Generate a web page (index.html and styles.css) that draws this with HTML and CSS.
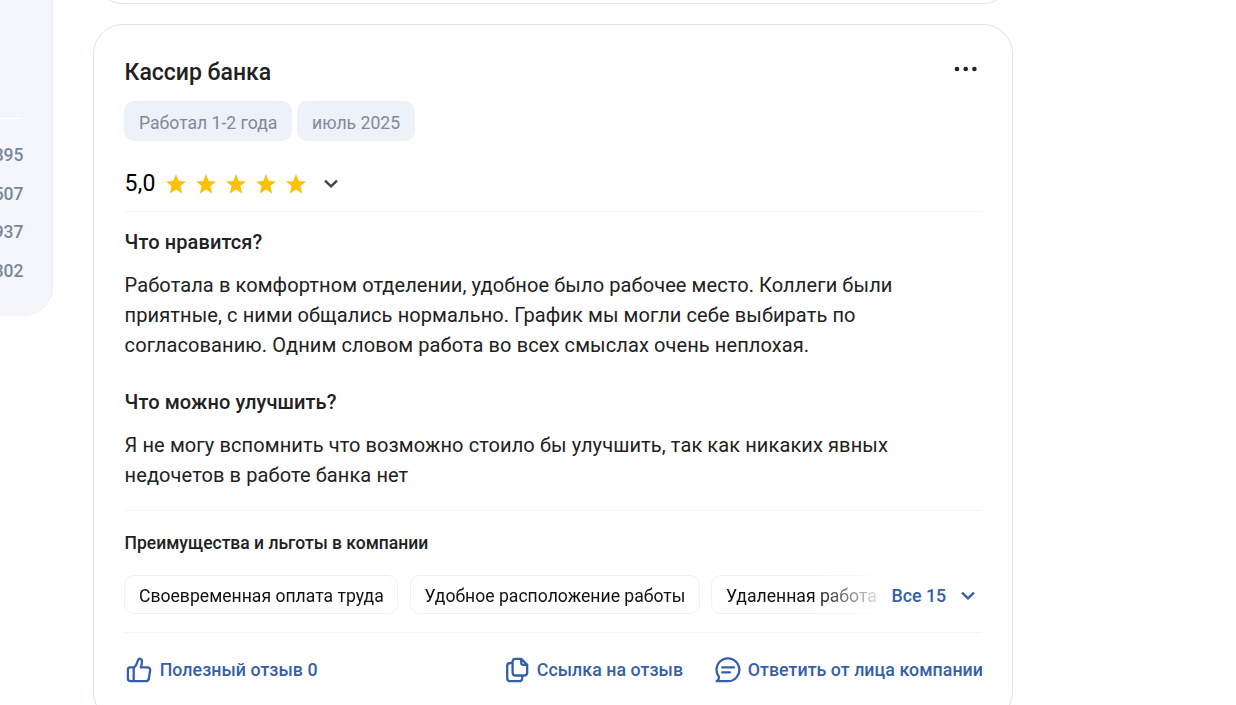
FILE: index.html
```html
<!DOCTYPE html>
<html lang="ru">
<head>
  <meta charset="UTF-8" />
  <title>Отзывы о работе</title>
  <link rel="stylesheet" href="styles.css">
</head>
<body>
  <div class="page">
    <aside class="sidebar">
      <div class="sidebar-line"></div>
      <ul class="counts">
        <li>895</li>
        <li>507</li>
        <li>937</li>
        <li>302</li>
      </ul>
    </aside>

    <main class="reviews">
      <div class="prev">
        <div class="card prev-card"></div>
      </div>

      <article class="card review">
        <div class="review-head">
          <h2>Кассир банка</h2>
          <svg class="dots" width="24" height="6" viewBox="0 0 24 6">
            <circle cx="3" cy="3" r="2.3"/>
            <circle cx="11.7" cy="3" r="2.3"/>
            <circle cx="20.4" cy="3" r="2.3"/>
          </svg>
        </div>

        <div class="tags">
          <span class="tag tag-work">Работал 1-2 года</span>
          <span class="tag tag-date">июль 2025</span>
        </div>

        <div class="rating">
          <span class="score">5,0</span>
          <div class="stars">
            <svg class="star" viewBox="0 0 20 20"><path d="M10 0l2.7 6.9 7.3.5-5.6 4.7 1.8 7.3L10 15.5l-6.2 3.9 1.8-7.3L0 7.4l7.3-.5z"/></svg>
            <svg class="star" viewBox="0 0 20 20"><path d="M10 0l2.7 6.9 7.3.5-5.6 4.7 1.8 7.3L10 15.5l-6.2 3.9 1.8-7.3L0 7.4l7.3-.5z"/></svg>
            <svg class="star" viewBox="0 0 20 20"><path d="M10 0l2.7 6.9 7.3.5-5.6 4.7 1.8 7.3L10 15.5l-6.2 3.9 1.8-7.3L0 7.4l7.3-.5z"/></svg>
            <svg class="star" viewBox="0 0 20 20"><path d="M10 0l2.7 6.9 7.3.5-5.6 4.7 1.8 7.3L10 15.5l-6.2 3.9 1.8-7.3L0 7.4l7.3-.5z"/></svg>
            <svg class="star" viewBox="0 0 20 20"><path d="M10 0l2.7 6.9 7.3.5-5.6 4.7 1.8 7.3L10 15.5l-6.2 3.9 1.8-7.3L0 7.4l7.3-.5z"/></svg>
          </div>
          <svg class="arrow" viewBox="0 0 14 10"><path d="M1 1.7L7 7.3L13 1.7"/></svg>
        </div>

        <section class="answers">
          <h3>Что нравится?</h3>
          <p>Работала в комфортном отделении, удобное было рабочее место. Коллеги были<br>приятные, с ними общались нормально. График мы могли себе выбирать по<br>согласованию. Одним словом работа во всех смыслах очень неплохая.</p>
          <h3>Что можно улучшить?</h3>
          <p>Я не могу вспомнить что возможно стоило бы улучшить, так как никаких явных<br>недочетов в работе банка нет</p>
        </section>

        <section class="benefits">
          <h4>Преимущества и льготы в компании</h4>
          <div class="benefits-row">
            <div class="benefits-list">
              <span class="benefit benefit-pay">Своевременная оплата труда</span>
              <span class="benefit benefit-place">Удобное расположение работы</span>
              <span class="benefit benefit-remote">Удаленная работа</span>
            </div>
            <a class="all">Все 15
              <svg class="arrow arrow-blue" viewBox="0 0 14 10"><path d="M1 1.7L7 7.3L13 1.7"/></svg>
            </a>
          </div>
        </section>

        <div class="actions">
          <a class="action">
            <svg class="icon" viewBox="0 0 28 28">
              <path d="M8.7 12V25.2M5 11.4H8.5C10 11.4 10.8 10 11.5 8.2L13.2 3.9C14 1.9 17 2.6 17 5.2C17 7.5 16.5 9 15.8 11.4H22.2C24.6 11.4 25.5 12.8 25.1 14.8L23.9 22.2C23.5 24.4 22.7 25.2 21 25.2H5.5C3.8 25.2 2.9 24.2 2.9 22.6V14C2.9 12.4 3.7 11.4 5 11.4Z"/>
            </svg>
            <span>Полезный отзыв 0</span>
          </a>
          <a class="action action-link">
            <svg class="icon" viewBox="0 0 28 28">
              <path d="M13.5 2.8H19.2L25.2 8.9V16.5C25.2 18.5 24.2 19.5 22.2 19.5H13.5C11.5 19.5 10.6 18.5 10.6 16.5V5.8C10.6 3.8 11.5 2.8 13.5 2.8ZM19.2 2.8V6.5C19.2 8.1 20 8.9 21.5 8.9H25.2M10.6 7H8.2C6.2 7 5.2 8 5.2 10V22.2C5.2 24.2 6.2 25.2 8.2 25.2H17.2C19.2 25.2 20.2 24.2 20.2 22.2V19.5"/>
            </svg>
            <span>Ссылка на отзыв</span>
          </a>
          <a class="action">
            <svg class="icon" viewBox="0 0 28 28">
              <path d="M3.5 25.2C5.2 24.2 6 22.8 6 20.9A11.4 11.4 0 1 1 15 25.2ZM9.2 11.3H21M9.2 16.3H17"/>
            </svg>
            <span>Ответить от лица компании</span>
          </a>
        </div>
      </article>
    </main>
  </div>
</body>
</html>
```
FILE: styles.css
```css
* {
  box-sizing: border-box;
}

body {
  margin: 0;
  height: 705px;
  overflow: hidden;
  background-color: #fff;
  color: #212121;
  font-family: Roboto, "Liberation Sans", sans-serif;
}

h2, h3, h4, p, ul {
  margin: 0;
  padding: 0;
  font-weight: 500;
}

.page {
  display: flex;
  align-items: flex-start;
  gap: 40px;
}

.sidebar {
  flex: none;
  width: 53px;
  height: 316px;
  padding-top: 118px;
  background-color: #f4f6fc;
  border-right: 1px solid #e8ecf3;
  border-bottom-right-radius: 30px;
}

.sidebar-line {
  width: 23px;
  height: 1px;
  background-color: #fff;
}

.counts {
  width: 23.5px;
  padding-top: 17px;
  list-style: none;
}

.counts li {
  display: flex;
  justify-content: flex-end;
  height: 38.7px;
  line-height: 38.7px;
  font-size: 17.5px;
  color: #7a8797;
}

.reviews {
  flex: none;
  width: 920px;
}

.card {
  border: 1px solid #dee4ed;
  border-radius: 30px;
}

.prev {
  display: flex;
  align-items: flex-end;
  height: 4px;
  margin-bottom: 20px;
  overflow: hidden;
}

.prev-card {
  flex: none;
  width: 920px;
  height: 80px;
}

.review {
  height: 698px;
  padding: 30px;
}

.review-head {
  display: flex;
  justify-content: space-between;
  height: 46px;
  padding-left: 0.6px;
}

h2 {
  font-size: 23px;
  line-height: 36px;
}

.dots {
  margin: 11px 4px 0 0;
  fill: #212121;
}

.tags {
  display: flex;
  gap: 5px;
  height: 40px;
}

.tag {
  padding: 0 15px;
  border-radius: 10px;
  background-color: #edf1f8;
  color: #7f8a99;
  font-size: 17.6px;
  line-height: 44px;
  white-space: nowrap;
}

.tag-work {
  width: 168px;
}

.tag-date {
  width: 118px;
}

.rating {
  display: flex;
  align-items: center;
  height: 71px;
  padding-top: 15px;
  border-bottom: 1px solid #f4f5f8;
}

.score {
  width: 42px;
  padding-left: 0.6px;
  font-size: 23px;
  letter-spacing: 0.2px;
  color: #000;
}

.stars {
  display: flex;
  gap: 10px;
}

.star {
  width: 20px;
  height: 20px;
  fill: #ffc107;
}

.arrow {
  width: 14px;
  height: 10px;
  margin-left: 18px;
  fill: none;
  stroke: #424242;
  stroke-width: 2.4;
}

.answers {
  height: 299px;
  padding: 15px 0 0 0.6px;
  border-bottom: 1px solid #f4f5f8;
  letter-spacing: 0.1px;
}

h3 {
  height: 43px;
  font-size: 20px;
  line-height: 30px;
}

.answers p {
  margin-bottom: 27px;
  font-size: 20px;
  line-height: 30px;
  font-weight: 400;
  white-space: nowrap;
}

.benefits {
  height: 122px;
  padding-top: 17px;
  border-bottom: 1px solid #f4f5f8;
}

h4 {
  height: 47px;
  padding-left: 0.6px;
  font-size: 17.5px;
  line-height: 30px;
}

.benefits-row {
  display: flex;
}

.benefits-list {
  display: flex;
  gap: 11.5px;
  width: 753px;
  overflow: hidden;
  -webkit-mask-image: linear-gradient(to right, #000 690px, transparent 763px);
  mask-image: linear-gradient(to right, #000 690px, transparent 763px);
}

.benefit {
  flex: none;
  height: 39px;
  padding: 0 14px;
  border: 1px solid #eef0f6;
  border-radius: 10px;
  color: #111;
  font-size: 17.6px;
  line-height: 40px;
  white-space: nowrap;
}

.benefit-pay {
  width: 274px;
}

.benefit-place {
  width: 290px;
}

.benefit-remote {
  width: 180px;
}

.all {
  display: flex;
  align-items: center;
  margin-left: 14.5px;
  padding-top: 2px;
  color: #355fa8;
  font-size: 17.8px;
  font-weight: 500;
  white-space: nowrap;
}

.arrow-blue {
  margin-left: 14.5px;
  stroke: #355fa8;
}

.actions {
  display: flex;
  align-items: center;
  height: 73px;
  margin-right: -1px;
  padding-left: 1px;
}

.action {
  display: flex;
  align-items: center;
  gap: 6.7px;
  color: #355fa8;
  font-size: 17.8px;
  font-weight: 500;
  letter-spacing: 0.05px;
  white-space: nowrap;
}

.action-link {
  margin: 0 30px 0 auto;
}

.icon {
  width: 28px;
  height: 28px;
  fill: none;
  stroke: #355fa8;
  stroke-width: 2.3;
  stroke-linejoin: round;
  stroke-linecap: round;
}
```
